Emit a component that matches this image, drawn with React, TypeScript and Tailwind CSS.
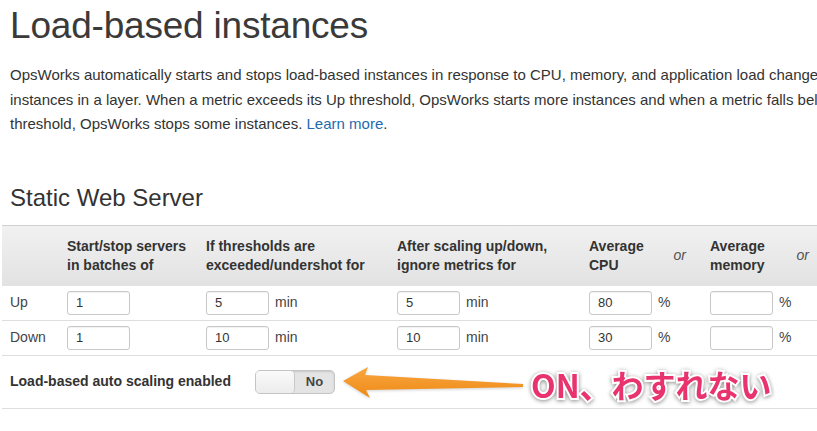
import React from "react";

const font = "font-['Liberation_Sans',Arial,sans-serif]";

const NumBox = ({ value }: { value: string }) => (
  <input
    readOnly
    value={value}
    className="w-[63px] h-[24px] rounded-[3px] border border-[#c8c8c8] bg-white px-[8px] text-[13px] text-[#333] outline-none shadow-[inset_0_1px_1px_rgba(0,0,0,0.06)]"
  />
);

const Cell = ({ value, unit }: { value: string; unit?: string }) => (
  <div className="flex items-center gap-[6px]">
    <NumBox value={value} />
    {unit && <span className="text-[14px] text-[#444]">{unit}</span>}
  </div>
);

const rows = [
  { label: "Up", batch: "1", exceed: "5", ignore: "5", cpu: "80", mem: "" },
  { label: "Down", batch: "1", exceed: "10", ignore: "10", cpu: "30", mem: "" },
];

const grid = "grid grid-cols-[65px_139px_191px_192px_121px_121px]";

export default function App() {
  return (
    <div className={`${font} w-[817px] h-[431px] overflow-hidden bg-white text-[#333]`}>
      <h1 className="pl-[10px] pt-[4px] text-[37px] leading-[44px] font-normal tracking-[-0.2px] text-[#3a3a3a]">
        Load-based instances
      </h1>
      <p className="pl-[10px] mt-[15px] w-[1100px] whitespace-nowrap text-[15px] leading-[24.5px] text-[#333]">
        OpsWorks automatically starts and stops load-based instances in response to CPU, memory, and application load changes across the
        <br />
        instances in a layer. When a metric exceeds its Up threshold, OpsWorks starts more instances and when a metric falls below its Down
        <br />
        threshold, OpsWorks stops some instances. <span className="text-[#1f6bb0]">Learn more</span>.
      </p>

      <h2 className="pl-[10px] mt-[46px] text-[24px] leading-[30px] text-[#333]">Static Web Server</h2>

      <div className="relative ml-[2px] mt-[12px] w-[830px]">
        <div className={`${grid} h-[61px] items-center border-t border-[#cfcfcf] bg-gradient-to-b from-[#f1f1f1] to-[#e2e2e2] text-[14px] font-bold leading-[19px] text-[#333]`}>
          <div />
          <div>Start/stop servers<br />in batches of</div>
          <div>If thresholds are<br />exceeded/undershot for</div>
          <div>After scaling up/down,<br />ignore metrics for</div>
          <div className="flex items-center justify-between pr-[24px]">
            <span>Average<br />CPU</span>
            <span className="italic font-normal text-[14px] text-[#555]">or</span>
          </div>
          <div className="flex items-center justify-between pr-[22px]">
            <span>Average<br />memory</span>
            <span className="italic font-normal text-[14px] text-[#555]">or</span>
          </div>
        </div>

        {rows.map((r) => (
          <div key={r.label} className={`${grid} h-[35px] items-center border-b border-[#dedede] text-[14px]`}>
            <div className="pl-[8px] text-[#444]">{r.label}</div>
            <Cell value={r.batch} />
            <Cell value={r.exceed} unit="min" />
            <Cell value={r.ignore} unit="min" />
            <Cell value={r.cpu} unit="%" />
            <Cell value={r.mem} unit="%" />
          </div>
        ))}

        <div className="flex h-[53px] items-center border-b border-[#dedede]">
          <div className="w-[253px] pl-[8px] text-[14px] font-bold text-[#333]">Load-based auto scaling enabled</div>
          <div className="flex h-[24px] w-[80px] items-center rounded-[5px] border border-[#c4c4c4] bg-[#e4e4e4] shadow-[inset_0_1px_2px_rgba(0,0,0,0.12)]">
            <div className="h-[22px] w-[39px] rounded-[4px] border-r border-[#c8c8c8] bg-gradient-to-b from-[#fafafa] to-[#ececec]" />
            <span className="flex-1 text-center text-[13px] font-bold text-[#444]">No</span>
          </div>
        </div>

        <svg className="absolute left-[331px] top-[135px]" width="200" height="45" viewBox="0 0 200 45">
          <defs>
            <linearGradient id="ar" x1="0" y1="0" x2="0" y2="1">
              <stop offset="0" stopColor="#f9a640" />
              <stop offset="1" stopColor="#ee8a16" />
            </linearGradient>
          </defs>
          <path
            d="M10 12 L35 -2 L32 6 L190 15 L190 18 L33 21 L37 29 Z"
            transform="translate(0 10)"
            fill="#000"
            opacity="0.18"
            style={{ filter: "blur(1.5px)" }}
          />
          <path d="M10 12 L35 -2 L32 6 L190 15 L190 18 L33 21 L37 29 Z" transform="translate(0 9)" fill="url(#ar)" />
        </svg>

        <div className="absolute left-[529px] top-[141px] font-['Noto_Sans_CJK_JP',sans-serif] text-[32px] font-bold leading-[36px] text-[#e8336e] [-webkit-text-stroke:4px_white] [paint-order:stroke_fill] drop-shadow-[0_1px_2px_rgba(0,0,0,0.45)]">
          ON、わすれない
        </div>
      </div>
    </div>
  );
}
